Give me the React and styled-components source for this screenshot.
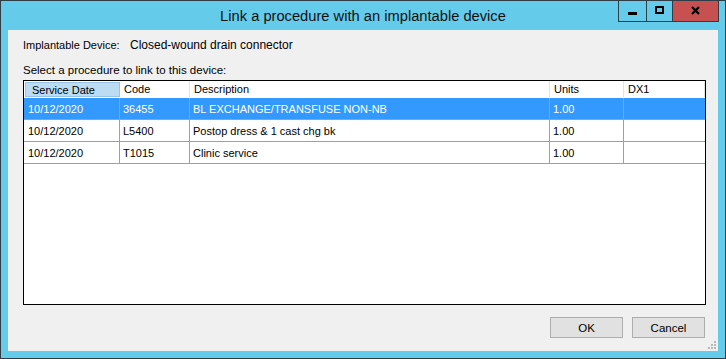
import React from "react";
import styled, { createGlobalStyle } from "styled-components";

const procedures = [
  { date: "10/12/2020", code: "36455", desc: "BL EXCHANGE/TRANSFUSE NON-NB", units: "1.00", dx: "" },
  { date: "10/12/2020", code: "L5400", desc: "Postop dress & 1 cast chg bk", units: "1.00", dx: "" },
  { date: "10/12/2020", code: "T1015", desc: "Clinic service", units: "1.00", dx: "" },
];

const columns = [
  { title: "Service Date", key: "date" },
  { title: "Code", key: "code" },
  { title: "Description", key: "desc" },
  { title: "Units", key: "units" },
  { title: "DX1", key: "dx" },
];

const GlobalStyle = createGlobalStyle`
  html, body {
    margin: 0;
    padding: 0;
    background: #ffffff;
  }
  * {
    box-sizing: border-box;
  }
`;

const Window = styled.div`
  width: 726px;
  height: 359px;
  display: flex;
  flex-direction: column;
  background: #65cbea;
  border: 1px solid #2f3d47;
  font-family: "Liberation Sans", Arial, sans-serif;
  position: relative;
`;

const TitleBar = styled.div`
  height: 29px;
  display: grid;
  grid-template-columns: 1fr auto 1fr;
  align-items: start;
`;

const Title = styled.div`
  grid-column: 2;
  font-size: 14.7px;
  line-height: 29px;
  color: #111;
  padding-top: 1px;
`;

const Controls = styled.div`
  grid-column: 3;
  justify-self: end;
  display: flex;
  margin-right: 6px;
  border: 1px solid #2f3d47;
  border-top: none;
`;

const ControlButton = styled.div`
  width: ${(p) => p.w}px;
  height: 20px;
  display: flex;
  align-items: center;
  justify-content: center;
  background: ${(p) => (p.danger ? "#c75050" : "#65cbea")};
  & + & {
    border-left: 1px solid #2f3d47;
  }
`;

const Client = styled.div`
  flex: 1;
  margin: 0 7px 7px 7px;
  background: #f0f0f0;
  display: flex;
  flex-direction: column;
  padding: 9px 12px 12px 15px;
  font-size: 11px;
  color: #000;
  position: relative;
`;

const DeviceLine = styled.div`
  display: flex;
  align-items: center;
  line-height: 13px;
  height: 13px;
`;

const DeviceLabel = styled.span`
  width: 107px;
`;

const DeviceValue = styled.span`
  font-size: 12px;
`;

const SelectLabel = styled.div`
  margin-top: 12px;
  line-height: 13px;
  height: 13px;
  font-size: 11.5px;
`;

const Grid = styled.div`
  margin-top: 3px;
  height: 225px;
  border: 1px solid #000;
  background: #fff;
  display: flex;
  flex-direction: column;
`;

const Row = styled.div`
  display: grid;
  grid-template-columns: 96px 70px 360px 74px 1fr;
  height: ${(p) => (p.header ? 17 : 22)}px;
  background: ${(p) => (p.selected ? "#3399ff" : "#fff")};
  color: ${(p) => (p.selected ? "#fff" : "#000")};
  border-bottom: 1px solid ${(p) => (p.header ? "#ffffff" : "#a0a0a0")};
`;

const HeaderCell = styled.div`
  display: flex;
  align-items: center;
  padding-left: ${(p) => (p.active ? 6 : 4)}px;
  border-right: 1px solid #e3e3e3;
  background: ${(p) => (p.active ? "#bcdcf4" : "#fff")};
  ${(p) => p.active && "border: 1px solid #99c4e8; margin: 1px 0 0 1px;"}
  white-space: nowrap;
  overflow: hidden;
`;

const Cell = styled.div`
  display: flex;
  align-items: center;
  padding-left: ${(p) => (p.first ? 4 : 3)}px;
  border-right: 1px solid #a0a0a0;
  white-space: nowrap;
  overflow: hidden;
  &:last-child {
    border-right: none;
  }
`;

const ButtonBar = styled.div`
  margin-top: 12px;
  display: flex;
  justify-content: flex-end;
  gap: 9px;
  padding-right: 1px;
`;

const Button = styled.button`
  width: 73px;
  height: 21px;
  background: #e1e1e1;
  border: 1px solid #adadad;
  font-family: "Liberation Sans", Arial, sans-serif;
  font-size: 11.5px;
  color: #000;
  padding: 0;
`;

const Grip = styled.svg`
  position: absolute;
  right: 1px;
  bottom: 1px;
`;

export default function App() {
  return (
    <>
      <GlobalStyle />
      <Window>
        <TitleBar>
          <Title>Link a procedure with an implantable device</Title>
          <Controls>
            <ControlButton w={27}>
              <svg width="9" height="20" viewBox="0 0 9 20">
                <rect x="0" y="11" width="9" height="3" fill="#000" />
              </svg>
            </ControlButton>
            <ControlButton w={26}>
              <svg width="9" height="20" viewBox="0 0 9 20">
                <rect x="1" y="6" width="7" height="6" fill="none" stroke="#000" strokeWidth="2" />
              </svg>
            </ControlButton>
            <ControlButton w={46} danger>
              <svg width="9" height="20" viewBox="0 0 9 20">
                <path d="M1 6 L8 13 M8 6 L1 13" stroke="#000" strokeWidth="2.2" />
              </svg>
            </ControlButton>
          </Controls>
        </TitleBar>
        <Client>
          <DeviceLine>
            <DeviceLabel>Implantable Device:</DeviceLabel>
            <DeviceValue>Closed-wound drain connector</DeviceValue>
          </DeviceLine>
          <SelectLabel>Select a procedure to link to this device:</SelectLabel>
          <Grid>
            <Row header>
              {columns.map((c, i) => (
                <HeaderCell key={c.key} active={i === 0}>
                  {c.title}
                </HeaderCell>
              ))}
            </Row>
            {procedures.map((p, r) => (
              <Row key={p.code} selected={r === 0}>
                {columns.map((c, i) => (
                  <Cell key={c.key} first={i === 0}>
                    {p[c.key]}
                  </Cell>
                ))}
              </Row>
            ))}
          </Grid>
          <ButtonBar>
            <Button>OK</Button>
            <Button>Cancel</Button>
          </ButtonBar>
          <Grip width="10" height="10" viewBox="0 0 10 10">
            {[
              [7, 1],
              [4, 4],
              [7, 4],
              [1, 7],
              [4, 7],
              [7, 7],
            ].map(([x, y]) => (
              <rect key={`${x}-${y}`} x={x} y={y} width="2" height="2" fill="#b8b8b8" />
            ))}
          </Grip>
        </Client>
      </Window>
    </>
  );
}
